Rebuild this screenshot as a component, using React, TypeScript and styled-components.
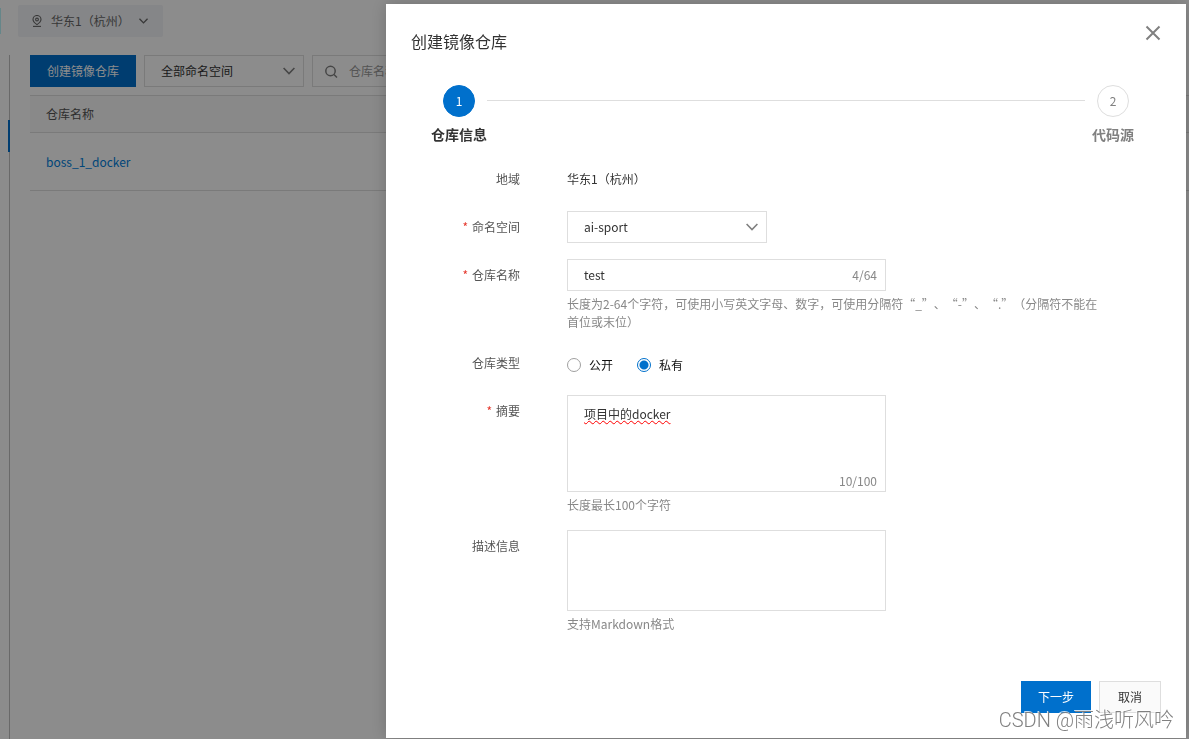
import React, { useState } from 'react';
import styled, { createGlobalStyle, css } from 'styled-components';

const GlobalStyle = createGlobalStyle`
  *, *::before, *::after { box-sizing: border-box; }
  body {
    margin: 0;
    background: #fff;
    color: #333;
    font: 12px/18px "Noto Sans CJK SC", "Noto Sans", sans-serif;
    text-spacing-trim: space-all;
  }
  button, input, select, textarea { font: inherit; color: inherit; margin: 0; }
`;

/* ---------- page behind the drawer ---------- */

const Page = styled.div`
  display: flex;
  flex-direction: column;
  height: 100vh;
  overflow: hidden;
`;

const TopBar = styled.header`
  display: flex;
  align-items: center;
  gap: 17px;
  padding: 5px 0 18px;
`;

const BrandEdge = styled.span`
  width: 1px;
  height: 26px;
  background: #b8f4fa;
`;

const RegionButton = styled.button`
  display: flex;
  align-items: center;
  height: 32px;
  padding: 0 15px 0 13px;
  border: 0;
  border-radius: 2px;
  background: #f2f4f7;
  color: #666;
`;

const RegionName = styled.span`
  margin: 0 9px 0 8px;
`;

const Body = styled.div`
  display: flex;
  flex: 1;
  min-height: 0;
`;

const Rail = styled.div`
  width: 10px;
  margin-right: 20px;
  padding-top: 65px;
  border-right: 1px solid #c0c0c0;
`;

const RailMarker = styled.div`
  width: 2px;
  height: 32px;
  margin: 0 -1px 0 auto;
  background: #0070cc;
`;

const Content = styled.main`
  flex: 1;
  min-width: 0;
`;

const Toolbar = styled.div`
  display: flex;
  gap: 8px;
  margin-bottom: 8px;
`;

const Button = styled.button<{ $primary?: boolean }>`
  height: 32px;
  padding: 0 16px;
  border: 1px solid ${p => (p.$primary ? '#0070cc' : '#dedede')};
  background: ${p => (p.$primary ? '#0070cc' : '#fafafa')};
  color: ${p => (p.$primary ? '#fff' : '#333')};
`;

const SelectBox = styled.div<{ $width: number }>`
  position: relative;
  width: ${p => p.$width}px;
  svg {
    position: absolute;
    top: 12px;
    right: 9px;
    pointer-events: none;
  }
`;

const fieldBox = css`
  display: block;
  width: 100%;
  border: 1px solid #dedede;
  border-radius: 0;
  background: #fff;
  outline: none;
`;

const SelectInput = styled.select`
  ${fieldBox}
  appearance: none;
  height: 32px;
  padding: 0 32px 0 16px;
`;

const SearchBox = styled.label`
  display: flex;
  align-items: center;
  gap: 11px;
  width: 320px;
  height: 32px;
  padding: 0 12px;
  border: 1px solid #dedede;
  color: #808080;
  input {
    flex: 1;
    padding: 0;
    border: 0;
    outline: none;
    background: none;
  }
  input::placeholder { color: #999; opacity: 1; }
`;

const Table = styled.table`
  width: 100%;
  border-collapse: separate;
  border-spacing: 0;
  text-align: left;
  th {
    height: 38px;
    padding: 0 16px;
    border: solid #dedede;
    border-width: 1px 0;
    background: #f9f9f9;
    color: #555;
    font-weight: 400;
  }
  td {
    height: 58px;
    padding: 0 16px;
    border-bottom: 1px solid #dedede;
  }
  a { color: #0080dd; text-decoration: none; }
`;

/* ---------- drawer ---------- */

const Overlay = styled.div`
  position: fixed;
  inset: 0;
  display: flex;
  justify-content: flex-end;
  padding: 4px 3px 1px 0;
  background: rgba(0, 0, 0, 0.45);
`;

const Drawer = styled.section`
  display: flex;
  flex-direction: column;
  width: 800px;
  max-width: 100%;
  padding: 20px 25px 24px;
  overflow: auto;
  background: #fff;
  box-shadow: 0 0 16px rgba(0, 0, 0, 0.2);
`;

const DrawerHeader = styled.div`
  display: flex;
  align-items: flex-start;
  justify-content: space-between;
  margin-bottom: 32px;
`;

const Title = styled.h2`
  margin: 0;
  padding-top: 5px;
  font-size: 16px;
  line-height: 24px;
  font-weight: 400;
`;

const CloseButton = styled.button`
  display: flex;
  padding: 1px 0;
  border: 0;
  background: none;
  color: #808080;
`;

const Steps = styled.ol`
  display: flex;
  margin: 0 0 19px;
  padding: 0 20px;
  list-style: none;
`;

const Step = styled.li<{ $active?: boolean }>`
  display: flex;
  flex-direction: column;
  align-items: center;
  gap: 7px;
  width: 56px;
  font-size: 14px;
  line-height: 20px;
  font-weight: 700;
  white-space: nowrap;
  color: ${p => (p.$active ? '#333' : '#808080')};
`;

const StepDot = styled.span<{ $active?: boolean }>`
  display: flex;
  align-items: center;
  justify-content: center;
  width: 32px;
  height: 32px;
  border: 1px solid ${p => (p.$active ? '#0070cc' : '#dedede')};
  border-radius: 50%;
  background: ${p => (p.$active ? '#0070cc' : '#fff')};
  color: ${p => (p.$active ? '#fff' : '#808080')};
  font-size: 12px;
  font-weight: 400;
`;

const StepLine = styled.li`
  flex: 1;
  height: 1px;
  margin-top: 15px;
  background: #dedede;
`;

const Form = styled.form`
  display: flex;
  flex-direction: column;
  gap: 16px;
`;

const Row = styled.div`
  display: grid;
  grid-template-columns: 109px minmax(0, 535px);
  column-gap: 47px;
`;

const labelText = css`
  line-height: 32px;
  text-align: right;
  color: #555;
`;

const Label = styled.label`
  ${labelText}
`;

const LabelText = styled.span`
  ${labelText}
`;

const Star = styled.span`
  margin-right: 4px;
  color: #e5382e;
`;

const Value = styled.span`
  line-height: 32px;
`;

const Help = styled.p`
  margin: 4px 0 0;
  color: #888;
`;

const Field = styled.div`
  position: relative;
  max-width: 319px;
`;

const TextInput = styled.input`
  ${fieldBox}
  height: 32px;
  padding: 0 56px 1px 16px;
`;

const TextArea = styled.textarea<{ $height: number; $flagged?: boolean }>`
  ${fieldBox}
  height: ${p => p.$height}px;
  padding: 9px 16px;
  resize: none;
  ${p => p.$flagged && css`text-decoration: underline wavy 1px #f00;`}
`;

const Counter = styled.span`
  position: absolute;
  right: 9px;
  bottom: 2px;
  color: #888;
`;

const InputCounter = styled(Counter)`
  bottom: 7px;
`;

const RadioGroup = styled.div`
  display: flex;
  align-items: center;
  gap: 24px;
  height: 32px;
  padding-top: 4px;
  color: #111;
  label {
    display: flex;
    align-items: center;
    gap: 8px;
  }
  input {
    appearance: none;
    width: 14px;
    height: 14px;
    border: 1px solid #a0a0a0;
    border-radius: 50%;
    background: #fff;
  }
  input:checked {
    border-color: #0070cc;
    background: radial-gradient(circle, #0070cc 4px, #fff 5px);
  }
`;

const Footer = styled.div`
  display: flex;
  justify-content: flex-end;
  gap: 8px;
  margin-top: 32px;
`;

const CancelButton = styled(Button)`
  padding: 0 18px;
`;

const Watermark = styled.div`
  position: fixed;
  right: 15px;
  bottom: 7px;
  font: 300 20px/24px Roboto, "Noto Sans CJK SC", sans-serif;
  color: #808080;
  text-shadow: -1px -1px 0 rgba(255, 255, 255, 0.8);
  white-space: nowrap;
  pointer-events: none;
`;

/* ---------- icons ---------- */

const Chevron = ({ width = 12, height = 8, stroke = '#808080', line = 1.6 }) => (
  <svg width={width} height={height} viewBox="0 0 12 8" fill="none" stroke={stroke} strokeWidth={line} aria-hidden="true">
    <path d="M.6 1 6 6.5 11.4 1" />
  </svg>
);

const PinIcon = () => (
  <svg width="12" height="12" viewBox="0 0 12 12" fill="none" stroke="#666" strokeWidth="1.1" aria-hidden="true">
    <path d="M6 9.6C3.4 7.8 2 6.300 2 4.500a4 4 0 0 1 8 0C10 6.300 8.600 7.800 6 9.600Z" />
    <circle cx="6" cy="4.500" r="1.400" />
    <path d="M2 11.400h8" />
  </svg>
);

const SearchIcon = () => (
  <svg width="13" height="13" viewBox="0 0 13 13" fill="none" stroke="currentColor" strokeWidth="1.500" aria-hidden="true">
    <circle cx="5.500" cy="6" r="4.700" />
    <path d="m9 9.500 3 3" />
  </svg>
);

const CloseIcon = () => (
  <svg width="16" height="16" viewBox="0 0 16 16" fill="none" stroke="currentColor" strokeWidth="2" aria-hidden="true">
    <path d="m1.500 1.500 13 13m0-13-13 13" />
  </svg>
);

export default function App() {
  const [name, setName] = useState('test');
  const [summary, setSummary] = useState('项目中的docker');
  const [kind, setKind] = useState('private');

  return (
    <>
      <GlobalStyle />
      <Page lang="zh-CN">
        <TopBar>
          <BrandEdge />
          <RegionButton type="button">
            <PinIcon />
            <RegionName>华东1（杭州）</RegionName>
            <Chevron width={9} height={6} stroke="#666" line={1.8} />
          </RegionButton>
        </TopBar>
        <Body>
          <Rail><RailMarker /></Rail>
          <Content>
            <Toolbar>
              <Button $primary type="button">创建镜像仓库</Button>
              <SelectBox $width={160}>
                <SelectInput aria-label="全部命名空间">
                  <option>全部命名空间</option>
                </SelectInput>
                <Chevron />
              </SelectBox>
              <SearchBox>
                <SearchIcon />
                <input type="text" placeholder="仓库名称" aria-label="仓库名称" />
              </SearchBox>
            </Toolbar>
            <Table>
              <thead>
                <tr><th scope="col">仓库名称</th></tr>
              </thead>
              <tbody>
                <tr><td><a href="#boss_1_docker">boss_1_docker</a></td></tr>
              </tbody>
            </Table>
          </Content>
        </Body>
      </Page>

      <Overlay lang="zh-CN">
        <Drawer role="dialog" aria-modal="true" aria-labelledby="drawer-title">
          <DrawerHeader>
            <Title id="drawer-title">创建镜像仓库</Title>
            <CloseButton type="button" aria-label="关闭"><CloseIcon /></CloseButton>
          </DrawerHeader>

          <Steps>
            <Step $active><StepDot $active>1</StepDot>仓库信息</Step>
            <StepLine aria-hidden="true" />
            <Step><StepDot>2</StepDot>代码源</Step>
          </Steps>

          <Form onSubmit={e => e.preventDefault()}>
            <Row>
              <LabelText>地域</LabelText>
              <Value>华东1（杭州）</Value>
            </Row>
            <Row>
              <Label htmlFor="namespace"><Star>*</Star>命名空间</Label>
              <SelectBox $width={200}>
                <SelectInput id="namespace">
                  <option>ai-sport</option>
                </SelectInput>
                <Chevron />
              </SelectBox>
            </Row>
            <Row>
              <Label htmlFor="repo-name"><Star>*</Star>仓库名称</Label>
              <div>
                <Field>
                  <TextInput id="repo-name" type="text" maxLength={64} value={name} onChange={e => setName(e.target.value)} />
                  <InputCounter>{name.length}/64</InputCounter>
                </Field>
                <Help>长度为2-64个字符，可使用小写英文字母、数字，可使用分隔符“_”、“-”、“.”（分隔符不能在首位或末位）</Help>
              </div>
            </Row>
            <Row>
              <LabelText id="repo-kind">仓库类型</LabelText>
              <RadioGroup role="radiogroup" aria-labelledby="repo-kind">
                <label>
                  <input type="radio" name="kind" checked={kind === 'public'} onChange={() => setKind('public')} />
                  公开
                </label>
                <label>
                  <input type="radio" name="kind" checked={kind === 'private'} onChange={() => setKind('private')} />
                  私有
                </label>
              </RadioGroup>
            </Row>
            <Row>
              <Label htmlFor="summary"><Star>*</Star>摘要</Label>
              <div>
                <Field>
                  <TextArea id="summary" $height={97} $flagged maxLength={100} value={summary} onChange={e => setSummary(e.target.value)} />
                  <Counter>{summary.length}/100</Counter>
                </Field>
                <Help>长度最长100个字符</Help>
              </div>
            </Row>
            <Row>
              <Label htmlFor="description">描述信息</Label>
              <div>
                <Field>
                  <TextArea id="description" $height={81} />
                </Field>
                <Help>支持Markdown格式</Help>
              </div>
            </Row>
            <Footer>
              <Button $primary type="submit">下一步</Button>
              <CancelButton type="button">取消</CancelButton>
            </Footer>
          </Form>
        </Drawer>
      </Overlay>
      <Watermark lang="zh-CN">CSDN @雨浅听风吟</Watermark>
    </>
  );
}
